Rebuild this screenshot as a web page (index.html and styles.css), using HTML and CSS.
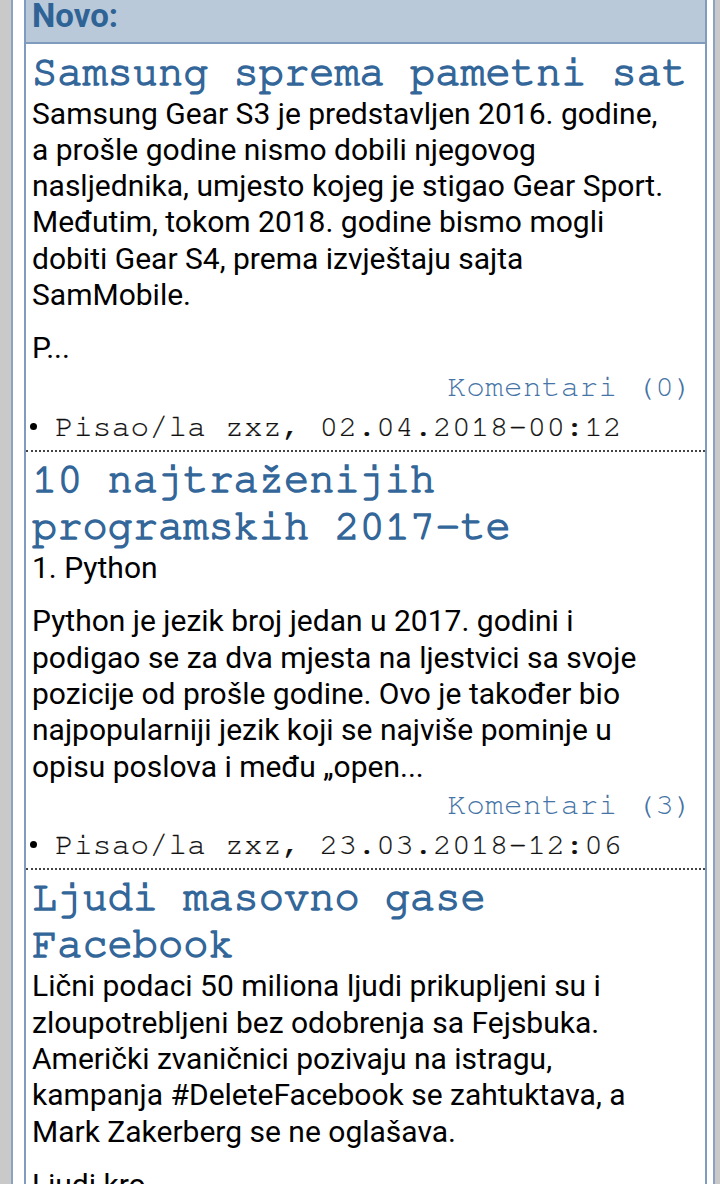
FILE: index.html
```html
<!DOCTYPE html>
<html lang="bs">
<head>
<meta charset="utf-8">
<title>Novo</title>
<link rel="stylesheet" href="styles.css">
</head>
<body>
<div class="page">
  <div class="box">
    <div class="box-head">Novo:</div>

    <div class="news">
      <h2 class="news-title">Samsung sprema pametni sat</h2>
      <div class="news-body">
        <p>Samsung Gear S3 je predstavljen 2016. godine,<br>a prošle godine nismo dobili njegovog<br>nasljednika, umjesto kojeg je stigao Gear Sport.<br>Međutim, tokom 2018. godine bismo mogli<br>dobiti Gear S4, prema izvještaju sajta<br>SamMobile.</p>
        <p>P...</p>
      </div>
      <div class="news-comments"><a class="comments-link">Komentari (0)</a></div>
      <div class="news-meta"><span class="bullet"></span>Pisao/la zxz, 02.04.2018-00:12</div>
    </div>

    <div class="news">
      <h2 class="news-title">10 najtraženijih programskih 2017-te</h2>
      <div class="news-body">
        <p>1. Python</p>
        <p>Python je jezik broj jedan u 2017. godini i<br>podigao se za dva mjesta na ljestvici sa svoje<br>pozicije od prošle godine. Ovo je također bio<br>najpopularniji jezik koji se najviše pominje u<br>opisu poslova i među „open...</p>
      </div>
      <div class="news-comments"><a class="comments-link">Komentari (3)</a></div>
      <div class="news-meta"><span class="bullet"></span>Pisao/la zxz, 23.03.2018-12:06</div>
    </div>

    <div class="news">
      <h2 class="news-title">Ljudi masovno gase Facebook</h2>
      <div class="news-body">
        <p>Lični podaci 50 miliona ljudi prikupljeni su i<br>zloupotrebljeni bez odobrenja sa Fejsbuka.<br>Američki zvaničnici pozivaju na istragu,<br>kampanja #DeleteFacebook se zahtuktava, a<br>Mark Zakerberg se ne oglašava.</p>
        <p>Ljudi kro...</p>
      </div>
    </div>
  </div>
</div>
</body>
</html>
```

FILE: styles.css
```css
html, body {
  margin: 0;
  padding: 0;
}

body {
  background: #c9c9c9;
  font-family: Roboto, "Liberation Sans", sans-serif;
  color: #000;
}

.page {
  margin-left: 11px;
  width: 683px;
  min-height: 100vh;
  background: #fff;
  border-left: 2px solid #8aa3c3;
  border-right: 2px solid #8aa3c3;
  padding: 0 6px 0 11px;
  overflow: hidden;
}

.box {
  border-left: 2px solid #7f9bbe;
  border-right: 2px solid #7f9bbe;
  background: #fff;
}

.box-head {
  background: #b9c9da;
  border-bottom: 2px solid #7f9bbe;
  color: #2f6396;
  font-family: Roboto, "Liberation Sans", sans-serif;
  font-weight: 700;
  font-size: 33px;
  line-height: 32px;
  padding: 0 6px 10px 6px;
}

.news {
  padding: 4.5px 2px 3px 6px;
  border-bottom: 2px dotted #444;
}

.news-title {
  margin: 0;
  font-family: "Nimbus Mono PS", "Nimbus Mono L", "FreeMono", "Courier New", Courier, "Liberation Mono", monospace;
  font-weight: 400;
  font-size: 42px;
  line-height: 47px;
  color: #336699;
  -webkit-text-stroke: 1.5px #336699;
}

.news-body {
  font-size: 30px;
  line-height: 36.3px;
  white-space: nowrap;
}

.news-body p {
  margin: 0 0 17px;
}

.news-body p:last-child {
  margin-bottom: 0;
}

.news-comments {
  text-align: right;
  padding-right: 10px;
  font-family: "Nimbus Mono PS", "Nimbus Mono L", "FreeMono", "Courier New", Courier, "Liberation Mono", monospace;
  font-size: 31px;
  line-height: 40px;
  letter-spacing: 0.3px;
}

.comments-link {
  color: #4674a6;
  text-decoration: none;
}

.news-meta {
  font-family: "Nimbus Mono PS", "Nimbus Mono L", "FreeMono", "Courier New", Courier, "Liberation Mono", monospace;
  font-size: 31px;
  line-height: 40px;
  letter-spacing: 0.3px;
  color: #111;
  -webkit-text-stroke: 0.2px #111;
  display: flex;
  align-items: center;
  margin-left: -2px;
}

.bullet {
  width: 7px;
  height: 7px;
  border-radius: 50%;
  background: #000;
  margin-right: 18px;
  flex: none;
}
```
